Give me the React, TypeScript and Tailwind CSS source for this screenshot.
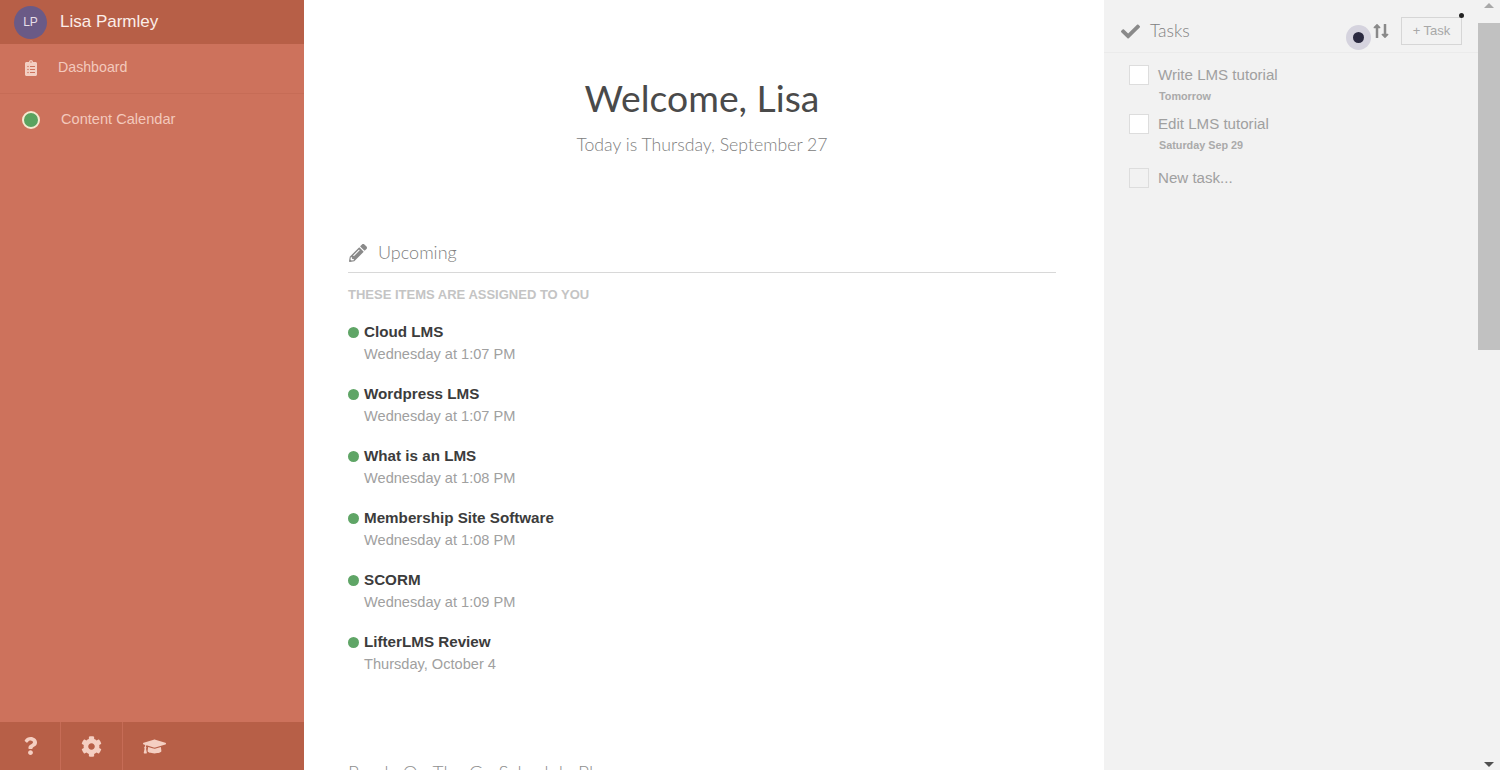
import { FaCheck, FaClipboardList, FaCog, FaGraduationCap, FaLongArrowAltDown, FaLongArrowAltUp, FaPencilAlt, FaQuestion } from "react-icons/fa";

const upcoming = [
  { title: "Cloud LMS", when: "Wednesday at 1:07 PM" },
  { title: "Wordpress LMS", when: "Wednesday at 1:07 PM" },
  { title: "What is an LMS", when: "Wednesday at 1:08 PM" },
  { title: "Membership Site Software", when: "Wednesday at 1:08 PM" },
  { title: "SCORM", when: "Wednesday at 1:09 PM" },
  { title: "LifterLMS Review", when: "Thursday, October 4" },
];

const tasks = [
  { title: "Write LMS tutorial", due: "Tomorrow" },
  { title: "Edit LMS tutorial", due: "Saturday Sep 29" },
];

const sans = "font-['Liberation_Sans',Arial,sans-serif]";
const heading = "font-['Lato',sans-serif]";

function Sidebar() {
  return (
    <aside className="w-[304px] h-[770px] shrink-0 flex flex-col bg-[#cd725c] shadow-[1px_0_3px_rgba(0,0,0,0.15)]">
      <div className="h-[44px] shrink-0 flex items-center pl-[14px] bg-[#b75f47]">
        <div className="w-[33px] h-[33px] rounded-full bg-[#6a5a86] flex items-center justify-center text-[12px] text-[#e8dfe8]">LP</div>
        <span className="ml-[13px] text-[17px] text-[#fbeee9]">Lisa Parmley</span>
      </div>
      <div className="h-[50px] shrink-0 flex items-center pl-[23px] pb-[2px] border-b border-[#c66c56]">
        <FaClipboardList className="w-[16px] h-[16px] text-[#f3cfc3]" />
        <span className="ml-[19px] text-[14.2px] text-[#f3c9bc]">Dashboard</span>
      </div>
      <div className="h-[52px] shrink-0 flex items-center pl-[22px]">
        <span className="w-[18px] h-[18px] rounded-full bg-[#5aa35f] border-2 border-[#f5ead0]" />
        <span className="ml-[21px] text-[14.6px] text-[#f3c9bc]">Content Calendar</span>
      </div>
      <div className="mt-auto h-[48px] shrink-0 flex bg-[#b75f47] text-[#f5cfc2]">
        <div className="w-[61px] flex items-center justify-center border-r border-[#c66c56]">
          <FaQuestion className="w-[15px] h-[18px]" />
        </div>
        <div className="w-[62px] flex items-center justify-center border-r border-[#c66c56]">
          <FaCog className="w-[21px] h-[21px]" />
        </div>
        <div className="w-[62px] flex items-center justify-center">
          <FaGraduationCap className="w-[23px] h-[23px]" />
        </div>
      </div>
    </aside>
  );
}

function Main() {
  return (
    <main className="w-[800px] h-[770px] shrink-0 overflow-hidden bg-white pl-[44px] pr-[48px] pt-[74px]">
      <h1 className={`${heading} text-center text-[37.3px] leading-[48px] font-normal text-[#4a4a4a]`}>Welcome, Lisa</h1>
      <p className={`${heading} mt-[11px] text-center text-[17.7px] leading-[24px] font-light text-[#808080]`}>Today is Thursday, September 27</p>
      <div className="mt-[79px] h-[37px] flex items-center border-b border-[#d8d8d8] pb-[3px]">
        <FaPencilAlt className="w-[18px] h-[18px] text-[#8a8a8a] ml-px" />
        <span className={`${heading} ml-[11px] text-[18px] font-light text-[#808080]`}>Upcoming</span>
      </div>
      <p className="mt-[14px] text-[13px] leading-[16px] font-bold text-[#c4c4c4]">THESE ITEMS ARE ASSIGNED TO YOU</p>
      <ul className="mt-[18px] flex flex-col gap-[18px]">
        {upcoming.map((item) => (
          <li key={item.title} className="h-[44px]">
            <div className="flex items-center h-[22px]">
              <span className="w-[11px] h-[11px] rounded-full bg-[#5fa566]" />
              <span className="ml-[5px] text-[15.2px] font-bold text-[#3c3c3c]">{item.title}</span>
            </div>
            <div className="ml-[16px] text-[14.6px] leading-[22px] text-[#a0a0a0]">{item.when}</div>
          </li>
        ))}
      </ul>
      <p className={`${heading} mt-[86px] text-[19px] leading-[24px] font-light text-[#8f8f8f]`}>Ready On The Go Schedule Pl</p>
    </main>
  );
}

function Tasks() {
  return (
    <section className="relative w-[374px] h-[770px] shrink-0 bg-[#f2f2f2]">
      <div className="h-[53px] flex items-center pl-[17px] pr-[16px] pt-[10px] border-b border-[#ebebeb]">
        <FaCheck className="w-[19px] h-[19px] text-[#8a8a8a]" />
        <span className={`${heading} ml-[10px] text-[17.5px] font-light text-[#808080]`}>Tasks</span>
        <div className="ml-auto flex items-center text-[#8a8a8a] mr-[12px]">
          <FaLongArrowAltUp className="w-[8px] h-[18px]" />
          <FaLongArrowAltDown className="w-[8px] h-[18px]" />
        </div>
        <button className="w-[61px] h-[28px] border border-[#d6d6d6] text-[13px] text-[#a8a8a8]">+ Task</button>
      </div>
      <ul className="pl-[25px] pt-[11px]">
        {tasks.map((task) => (
          <li key={task.title} className="h-[49px]">
            <div className="flex items-center h-[22px]">
              <span className="w-[20px] h-[20px] bg-white border border-[#dddddd]" />
              <span className="ml-[9px] text-[15.1px] text-[#a0a0a0]">{task.title}</span>
            </div>
            <div className="ml-[30px] mt-[3px] text-[10.8px] leading-[14px] font-bold text-[#aaaaaa]">{task.due}</div>
          </li>
        ))}
        <li className="flex items-center h-[22px] mt-[5px]">
          <span className="w-[20px] h-[20px] border border-[#dddddd]" />
          <span className="ml-[9px] text-[15.1px] text-[#a0a0a0]">New task...</span>
        </li>
      </ul>
      <span className="absolute left-[242px] top-[25px] w-[25px] h-[25px] rounded-full bg-[#d5d3de] flex items-center justify-center">
        <span className="w-[11px] h-[11px] rounded-full bg-[#2b2a40]" />
      </span>
      <span className="absolute left-[355px] top-[13px] w-[5px] h-[5px] bg-[#222222] rounded-full" />
    </section>
  );
}

function Scrollbar() {
  return (
    <div className="w-[22px] h-[770px] shrink-0 flex flex-col bg-[#f2f2f2]">
      <div className="h-[23px] flex items-center justify-center">
        <span className="w-0 h-0 border-x-[5px] border-x-transparent border-b-[5px] border-b-[#a8a8a8] -mt-[12px]" />
      </div>
      <div className="h-[327px] bg-[#c1c1c1]" />
      <div className="mt-auto h-[23px] flex items-center justify-center">
        <span className="w-0 h-0 border-x-[5px] border-x-transparent border-t-[5px] border-t-[#505050] mt-[12px]" />
      </div>
    </div>
  );
}

export default function App() {
  return (
    <div className={`${sans} flex w-[1500px] h-[770px] overflow-hidden`}>
      <Sidebar />
      <Main />
      <Tasks />
      <Scrollbar />
    </div>
  );
}
